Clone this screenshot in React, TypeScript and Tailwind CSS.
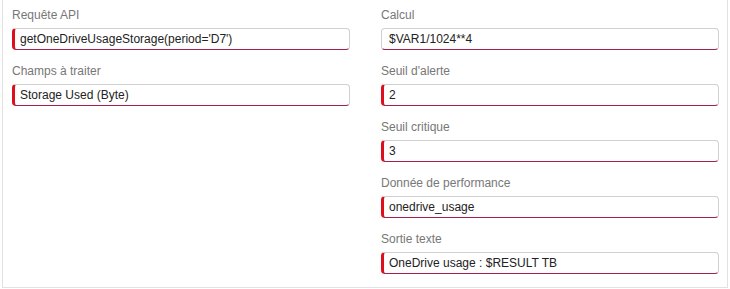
const Field = ({label, value, flag = true}: {label: string; value: string; flag?: boolean}) => {
    return (<div className="mb-[13px]">
        <div className="text-[12px] leading-[16px] text-[#777] mb-[5px]">{label}</div>
        <div className={"h-[22px] flex items-center rounded-[4px] border border-[#d0d0d0] border-b-[#a3204e] text-[12px] text-[#222] pr-2 " + (flag ? "border-l-[3px] border-l-[#dd0f1c] pl-[5px]" : "pl-[7px]")}>
            {value}
        </div>
    </div>);
};

const App = () => {
    return (<div className="w-[730px] h-[289px] bg-white" style={{fontFamily: '"Liberation Sans", Arial, sans-serif'}}>
        <div className="ml-[2px] w-[726px] h-[288px] border border-t-0 border-[#e2e2e2] pl-[9px] pt-[7px] flex gap-[31px]">
            <div className="w-[338px]">
                <Field label="Requête API" value="getOneDriveUsageStorage(period='D7')"/>
                <Field label="Champs à traiter" value="Storage Used (Byte)"/>
            </div>
            <div className="w-[338px]">
                <Field label="Calcul" value="$VAR1/1024**4" flag={false}/>
                <Field label="Seuil d'alerte" value="2"/>
                <Field label="Seuil critique" value="3"/>
                <Field label="Donnée de performance" value="onedrive_usage"/>
                <Field label="Sortie texte" value="OneDrive usage : $RESULT TB"/>
            </div>
        </div>
    </div>);
};
export default App;
